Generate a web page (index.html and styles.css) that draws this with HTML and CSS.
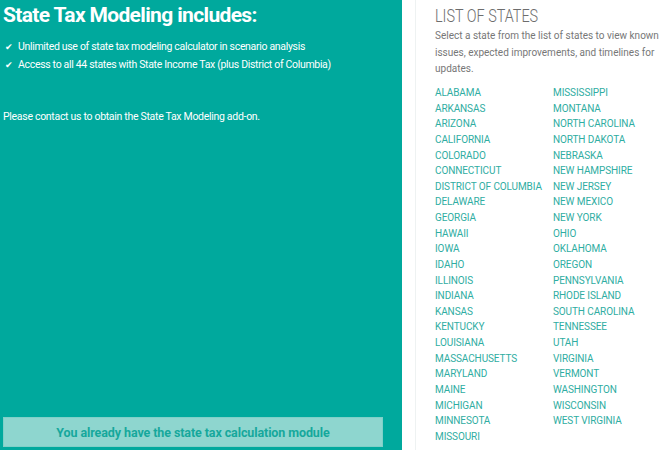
FILE: index.html
```html
<!DOCTYPE html>
<html>
<head>
<meta charset="utf-8">
<link rel="stylesheet" href="styles.css">
</head>
<body>
<div class="page">
  <section class="promo">
    <h1 class="promo-title">State Tax Modeling includes:</h1>
    <ul class="features">
      <li><span class="check">✔</span>Unlimited use of state tax modeling calculator in scenario analysis</li>
      <li><span class="check">✔</span>Access to all 44 states with State Income Tax (plus District of Columbia)</li>
    </ul>
    <p class="contact">Please contact us to obtain the State Tax Modeling add-on.</p>
    <div class="spacer"></div>
    <div class="owned">You already have the state tax calculation module</div>
  </section>
  <aside class="states">
    <h2 class="states-title"><span>LIST OF STATES</span></h2>
    <p class="states-desc">Select a state from the list of states to view known issues, expected improvements, and timelines for updates.</p>
    <ul class="state-list">
      <li>ALABAMA</li><li>ARKANSAS</li><li>ARIZONA</li><li>CALIFORNIA</li><li>COLORADO</li><li>CONNECTICUT</li><li>DISTRICT OF COLUMBIA</li><li>DELAWARE</li><li>GEORGIA</li><li>HAWAII</li><li>IOWA</li><li>IDAHO</li><li>ILLINOIS</li><li>INDIANA</li><li>KANSAS</li><li>KENTUCKY</li><li>LOUISIANA</li><li>MASSACHUSETTS</li><li>MARYLAND</li><li>MAINE</li><li>MICHIGAN</li><li>MINNESOTA</li><li>MISSOURI</li>
      <li>MISSISSIPPI</li><li>MONTANA</li><li>NORTH CAROLINA</li><li>NORTH DAKOTA</li><li>NEBRASKA</li><li>NEW HAMPSHIRE</li><li>NEW JERSEY</li><li>NEW MEXICO</li><li>NEW YORK</li><li>OHIO</li><li>OKLAHOMA</li><li>OREGON</li><li>PENNSYLVANIA</li><li>RHODE ISLAND</li><li>SOUTH CAROLINA</li><li>TENNESSEE</li><li>UTAH</li><li>VIRGINIA</li><li>VERMONT</li><li>WASHINGTON</li><li>WISCONSIN</li><li>WEST VIRGINIA</li>
    </ul>
  </aside>
</div>
</body>
</html>
```
FILE: styles.css
```css
html, body {
  margin: 0;
  padding: 0;
  background: #ffffff;
  font-family: Roboto, "Liberation Sans", sans-serif;
}
.page {
  display: flex;
  width: 670px;
  height: 450px;
  overflow: hidden;
}
.promo {
  width: 402px;
  flex: none;
  background: #00a99d;
  color: #ffffff;
  display: flex;
  flex-direction: column;
  padding: 0 0 3px 3px;
  box-sizing: border-box;
}
.promo-title {
  margin: 1px 0 0 0;
  font-size: 21px;
  letter-spacing: -0.65px;
  font-weight: 700;
  line-height: 28px;
}
.features {
  list-style: none;
  margin: 9px 0 0 0;
  padding: 0 0 0 2px;
  font-size: 10.5px;
  letter-spacing: -0.32px;
  line-height: 17px;
}
.check {
  display: inline-block;
  width: 13px;
  font-size: 9px;
  letter-spacing: 0;
}
.contact {
  margin: 34px 0 0 0;
  font-size: 10.5px;
  letter-spacing: -0.3px;
  line-height: 17px;
}
.spacer {
  flex: 1;
}
.owned {
  width: 380px;
  height: 30px;
  background: #8ed6cf;
  border: 1px solid #7fd0c8;
  box-sizing: border-box;
  color: #16a89c;
  font-size: 12.5px;
  letter-spacing: -0.1px;
  font-weight: 700;
  display: flex;
  align-items: center;
  justify-content: center;
}
.states {
  flex: 1;
  margin-left: 13px;
  border-left: 1px solid #eef2f2;
  padding-left: 19px;
}
.states-title {
  margin: 5px 0 0 0;
  font-size: 18px;
  font-weight: 300;
  color: #6d6d6d;
  line-height: 22px;
  white-space: nowrap;
}
.states-title span {
  display: inline-block;
  transform: scaleX(0.8);
  transform-origin: left center;
}
.states-desc {
  margin: 1px 0 0 0;
  font-size: 10px;
  line-height: 16.7px;
  color: #777777;
  width: 226px;
}
.state-list {
  list-style: none;
  margin: 7px 0 0 0;
  padding: 0;
  display: grid;
  grid-auto-flow: column;
  grid-template-rows: repeat(23, 15.64px);
  grid-template-columns: 118px 110px;
  font-size: 10px;
  color: #2fada2;
  letter-spacing: -0.1px;
  line-height: 15.64px;
  white-space: nowrap;
}
```
